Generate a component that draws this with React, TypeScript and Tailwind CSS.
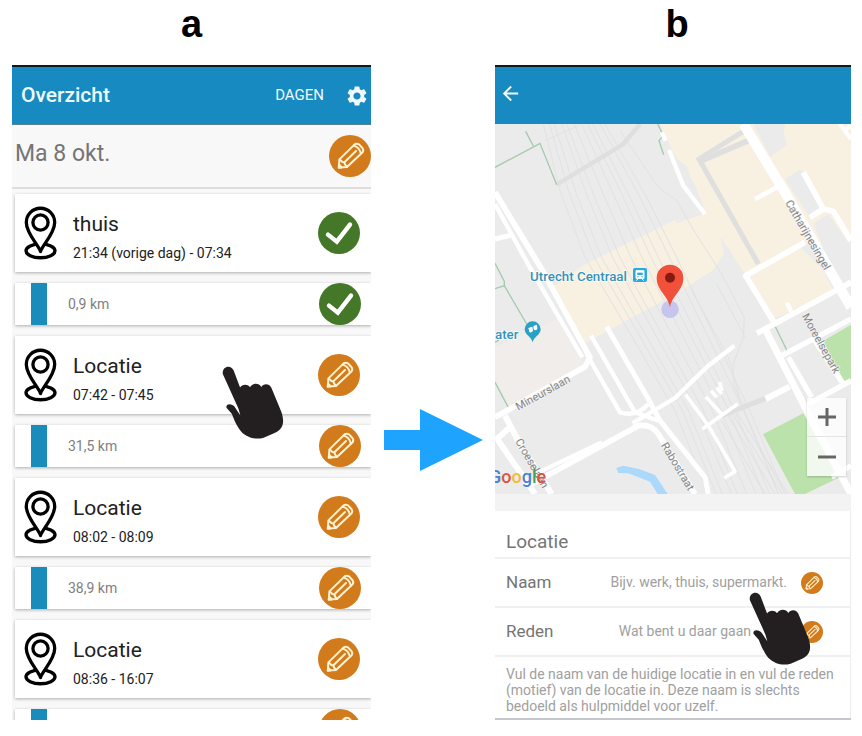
import React from "react";
import { MdArrowBack, MdSettings } from "react-icons/md";

type Status = "done" | "todo";
type Entry =
  | { kind: "place"; name: string; time: string; status: Status }
  | { kind: "trip"; distance?: string; status: Status };

const entries: Entry[] = [
  { kind: "place", name: "thuis", time: "21:34 (vorige dag) - 07:34", status: "done" },
  { kind: "trip", distance: "0,9 km", status: "done" },
  { kind: "place", name: "Locatie", time: "07:42 - 07:45", status: "todo" },
  { kind: "trip", distance: "31,5 km", status: "todo" },
  { kind: "place", name: "Locatie", time: "08:02 - 08:09", status: "todo" },
  { kind: "trip", distance: "38,9 km", status: "todo" },
  { kind: "place", name: "Locatie", time: "08:36 - 16:07", status: "todo" },
  { kind: "trip", status: "todo" },
];

function PencilBadge({ className }: { className: string }) {
  return (
    <svg viewBox="0 0 42 42" className={className} aria-hidden="true">
      <circle cx="21" cy="21" r="21" fill="#d27b1c" />
      <g fill="none" stroke="#fff3d2" strokeWidth="2" strokeLinejoin="round" strokeLinecap="round">
        <path d="M9.8 32.6 L10.4 24.4 L25.4 9.6 Q27.4 8 30 9.4 L33.4 13 Q35 15 33.6 17.2 L18 32 Z" />
        <path d="M24.8 10.6 Q30.4 12.2 31.8 18.4" />
        <path d="M11 24.6 L13.4 27 L15.4 27.4 L16 29.4 L17.8 31.6" />
        <path d="M15.4 27.2 L27 16" />
        <path d="M9.8 32.6 L10.2 29.8 L12.8 32.4 Z" fill="#fff3d2" />
      </g>
    </svg>
  );
}

function CheckBadge({ className }: { className: string }) {
  return (
    <svg viewBox="0 0 42 42" className={className} aria-hidden="true">
      <circle cx="21" cy="21" r="21" fill="#447828" />
      <path d="M10 22.6 L18.8 29.6 L32 12.6" fill="none" stroke="#fff" strokeWidth="4.4" strokeLinecap="round" strokeLinejoin="miter" />
    </svg>
  );
}

function StatusButton({ status }: { status: Status }) {
  return (
    <button type="button" aria-label={status === "done" ? "Bevestigd" : "Bewerken"} className="shrink-0">
      {status === "done" ? <CheckBadge className="size-[42px]" /> : <PencilBadge className="size-[42px]" />}
    </button>
  );
}

function PlaceIcon() {
  return (
    <svg viewBox="0 0 100 162" className="h-[54px] w-[33px] shrink-0" aria-hidden="true">
      <g fill="none" stroke="#000" strokeWidth="10">
        <ellipse cx="50" cy="135" rx="44" ry="21" />
        <path
          d="M50 137 C44 118 7 82 7 49 A43 43 0 0 1 93 49 C93 82 56 118 50 137 Z"
          fill="#fff"
          strokeLinejoin="round"
        />
        <circle cx="50" cy="49" r="23" />
      </g>
    </svg>
  );
}

function Hand({ className }: { className: string }) {
  return (
    <svg viewBox="38 48 184 220" className={className} aria-hidden="true">
      <path
        fill="#231f20"
        d="M39 72 C36 48 64 42 72 62 L91 113 C97 103 113 101 121 112 C128 98 148 98 155 111 C162 99 180 101 185 113 L215 185 C226 217 222 238 195 250 L162 264 C132 272 104 260 90 240 C76 220 72 206 66 192 L50 174 C48 160 64 160 74 170 L92 197 L86 176 Z"
      />
    </svg>
  );
}

const railLeft = [[145, 0], [195, 200], [270, 400], [400, 620], [540, 860], [640, 1110]];
const railRight = [[330, 0], [455, 220], [545, 400], [660, 640], [760, 850], [870, 1110]];
const rails = [0, 0.1, 0.18, 0.3, 0.38, 0.5, 0.62, 0.72, 0.8, 0.92, 1].map((t) =>
  railLeft.map(([x, y], i) => `${x + (railRight[i][0] - x) * t},${y + (railRight[i][1] - y) * t}`).join(" "),
);

function MapDrawing() {
  return (
    <svg
      viewBox="0 0 1068 1110"
      preserveAspectRatio="xMidYMid slice"
      className="absolute inset-0 size-full"
      role="img"
      aria-label="Kaart van Utrecht Centraal"
    >
      <rect width="1068" height="1110" fill="#ebebeb" />
      <path
        d="M495 0 H1068 V350 L910 363 L985 438 L1015 500 L840 583 L750 450 L735 430 L705 380 L690 385 L655 438 L600 473 L560 498 L490 538 L270 658 L175 488 L265 423 L540 288 L545 298 L630 268 L600 183 L585 158 L575 128 L550 118 Z"
        fill="#f8f0e1"
      />
      <path d="M0 670 L185 585 L270 730 L40 845 L0 760 Z" fill="#f1edeb" />
      <g fill="#ebebeb">
        <path d="M530 90 L575 128 L585 158 L600 183 L632 268 L545 298 L520 200 Z" />
        <path d="M775 0 H870 L866 30 L876 63 L825 98 Z" />
        <path d="M870 165 L920 135 L985 250 L945 280 Z M955 298 L1000 270 L1068 368 V500 L1030 480 Z" />
        <path d="M675 340 L705 380 L690 400 Z" />
      </g>

      <g fill="none" stroke="#e2e2e5" strokeWidth="3">
        {rails.map((points) => (
          <polyline key={points} points={points} />
        ))}
        <polyline points="375,20 490,190 545,230 600,325 680,450 748,580 745,640 715,720 715,780 790,960 850,1110" />
        <polyline points="665,480 740,620 750,640" />
        <polyline points="590,500 700,700 745,860 810,1000 870,1110" />
        <polyline points="150,50 250,5" />
      </g>
      <path
        d="M690 860 L840 1110 M700 850 L862 1110 M712 845 L880 1110 M680 890 L810 1110"
        fill="none"
        stroke="#dcdce1"
        strokeWidth="2"
      />

      <g fill="none" stroke="#dfdfdf">
        <path d="M185 182 L385 60 L435 0" strokeWidth="13" />
        <path d="M745 22 L612 105 L790 420" strokeWidth="15" />
        <path d="M615 112 L760 50" strokeWidth="17" />
        <path d="M680 875 L820 820" strokeWidth="15" />
      </g>

      <g fill="none" stroke="#a3cbad" strokeWidth="4">
        <path d="M0 130 L135 58 L185 182 M92 22 L115 66" />
        <path d="M0 418 L28 472 L28 485 L0 494 M28 485 L95 600" />
        <path d="M0 655 L12 648 M0 775 L40 850" />
        <path d="M488 0 L500 25 M505 35 L492 50 L506 92" />
        <path d="M841 608 L877 682" />
      </g>

      <g fill="#bbe2ab">
        <path d="M804 931 L925 868 L1030 1062 L930 1110 H900 Z" />
        <path d="M985 650 L1068 602 V765 L1048 774 Z" />
      </g>
      <path d="M364 1032 L385 1025 L432 1035 L480 1053 L518 1110 H488 L465 1073 L400 1048 L370 1047 Z" fill="#abd9fb" />

      <g fill="none" stroke="#fff" strokeLinejoin="round">
        <path d="M0 205 L140 435 L285 700 L270 728 L0 880" strokeWidth="17" />
        <path d="M0 240 L110 440 L262 700" strokeWidth="13" />
        <path d="M0 345 L50 333" strokeWidth="15" />
        <path d="M275 690 L375 865 Q425 880 460 840 M288 635 L420 865 L490 890" strokeWidth="13" />
        <path d="M335 608 L460 825 L495 890 L630 1060 L640 1110" strokeWidth="15" />
        <path d="M412 898 L540 822 L640 725 L718 665" strokeWidth="13" />
        <path d="M30 875 L75 960 L170 1110 M10 950 L120 1110 M0 950 L45 910" strokeWidth="18" />
        <path d="M110 1080 L430 905 Q470 900 490 930 L600 1110" strokeWidth="17" />
        <path d="M120 1050 L320 955" strokeWidth="12" />
        <path d="M572 812 L640 905 L720 1042 L688 1062 M622 915 L728 840 M632 818 L680 870 M648 800 L665 820 M665 790 L680 810 M674 774 L682 800" strokeWidth="11" />
        <path d="M812 825 L884 788" strokeWidth="18" />
        <path d="M500 25 L512 50 M522 78 L565 185 L630 270" strokeWidth="13" />
        <path d="M745 0 L870 205 L1068 550" strokeWidth="30" />
        <path d="M780 225 L850 188" strokeWidth="14" />
        <path d="M925 145 L985 255 L945 280 M985 255 L1015 262 L1068 350" strokeWidth="17" />
        <path d="M1035 0 L1068 45 M1048 20 L1068 5" strokeWidth="12" />
        <path d="M930 355 L752 455 L840 600 M786 628 L1068 475" strokeWidth="17" />
        <path d="M875 536 L890 565" strokeWidth="13" />
        <path d="M812 618 L925 840 L1068 1110" strokeWidth="21" />
        <path d="M860 695 L1068 585 M880 700 L950 820 M960 650 L1045 780 M940 840 L1068 770 M1068 1025 L1010 1060" strokeWidth="16" />
      </g>

      <g fontFamily="Roboto, sans-serif" fontSize="33" fill="#858585" stroke="#f4f4f4" strokeWidth="4" paintOrder="stroke">
        <text transform="translate(870 236) rotate(60)">Catharijnesingel</text>
        <text transform="translate(920 576) rotate(61)">Moreelsepark</text>
        <text transform="translate(70 860) rotate(-29)">Mineurslaan</text>
        <text transform="translate(60 952) rotate(60)">Croeselaan</text>
        <text transform="translate(497 964) rotate(59)">Rabostraat</text>
      </g>

      <g fontFamily="Roboto, sans-serif" fontSize="40" fontWeight="500" fill="#3592b6" stroke="#fff" strokeWidth="4" paintOrder="stroke">
        <text x="105" y="470">Utrecht Centraal</text>
        <text x="0" y="644">ater</text>
      </g>

      <rect x="414" y="432" width="42" height="42" rx="6" fill="#27a9e1" />
      <path d="M423 440 H447 V463 H423 Z M424 470 L430 463 M446 470 L440 463" fill="#fff" stroke="#fff" strokeWidth="3" />
      <path d="M427 446 H443 V453 H427 Z" fill="#27a9e1" />
      <circle cx="429" cy="458" r="2" fill="#27a9e1" />
      <circle cx="441" cy="458" r="2" fill="#27a9e1" />

      <path d="M113 655 C110 640 89 632 89 616 A24 24 0 0 1 137 616 C137 632 116 640 113 655 Z" fill="#28a2c4" />
      <path d="M100 612 L112 608 L114 620 Q110 628 103 624 Z M115 606 L126 602 L127 614 Q123 622 116 616 Z" fill="#fff" />

      <circle cx="525" cy="556" r="26" fill="#c5c5ee" />
      <path d="M525 550 C520 515 485 500 485 462 A40 40 0 0 1 565 462 C565 500 530 515 525 550 Z" fill="#f1503a" />
      <circle cx="525" cy="461" r="15" fill="#871a10" />
    </svg>
  );
}

function Overview() {
  return (
    <section aria-labelledby="label-a" className="relative min-h-0 overflow-hidden bg-[#f8f8f8]">
      <header className="flex h-[60px] items-center border-t-2 border-b border-t-[#0b1a22] border-b-[#5d7f90] bg-[#168ac1] pr-[2px] pl-[9px] text-[#f0fafd]">
        <h2 className="flex-1 text-[21px] font-medium">Overzicht</h2>
        <button type="button" className="mr-[21px] text-[15px]">DAGEN</button>
        <button type="button" aria-label="Instellingen">
          <MdSettings className="size-[24px]" />
        </button>
      </header>
      <div className="flex h-[64px] items-center border-b-2 border-[#dedede] pl-[3px]">
        <h3 className="flex-1 pb-1 text-[23px] text-[#757575]">Ma 8 okt.</h3>
        <StatusButton status="todo" />
      </div>
      <ul className="flex flex-col gap-[11px] pt-[5px] pl-[3px]">
        {entries.map((entry, index) =>
          entry.kind === "place" ? (
            <li key={index} className="flex h-[78px] items-center bg-white pr-[11px] pl-[9px] shadow-[0_1px_3px_rgba(0,0,0,0.3)]">
              <PlaceIcon />
              <div className="flex-1 pt-[8px] pl-[16px]">
                <div className="text-[21px] leading-[26px] text-[#212121]">{entry.name}</div>
                <div className="pt-[6px] text-[14px] leading-[20px] text-[#212121]">{entry.time}</div>
              </div>
              <StatusButton status={entry.status} />
            </li>
          ) : (
            <li key={index} className="flex h-[42px] shrink-0 items-center bg-white pr-[10px] pl-[16px] shadow-[0_1px_3px_rgba(0,0,0,0.3)]">
              <div className="w-[16px] self-stretch bg-[#1a8cbc]" />
              <div className="flex-1 pl-[21px] text-[14px] text-[#808080]">{entry.distance}</div>
              <StatusButton status={entry.status} />
            </li>
          ),
        )}
      </ul>
      <Hand className="pointer-events-none absolute top-[301px] left-[210px] h-[73px] w-[62px]" />
    </section>
  );
}

function Field({ id, label, placeholder, inputClass = "" }: { id: string; label: string; placeholder: string; inputClass?: string }) {
  return (
    <div className="flex h-[49px] items-center border-b-2 border-[#f0f0f0] pr-[27px] pl-[11px]">
      <label htmlFor={id} className="w-[70px] text-[17px] text-[#757575]">{label}</label>
      <input
        id={id}
        type="text"
        placeholder={placeholder}
        className={`min-w-0 flex-1 bg-transparent text-right text-[14px] outline-none placeholder:text-[#a0a0a0] ${inputClass}`}
      />
      <button type="button" aria-label={`${label} bewerken`} className="ml-[14px] shrink-0">
        <PencilBadge className="size-[22px]" />
      </button>
    </div>
  );
}

function LocationDetail() {
  return (
    <section aria-labelledby="label-b" className="relative flex min-h-0 flex-col border-b-2 border-[#c4c8cd] bg-white">
      <header className="flex h-[59px] shrink-0 items-center border-t-2 border-[#0b1a22] bg-[#168ac1] pb-1 pl-1 text-[#f0fafd]">
        <button type="button" aria-label="Terug">
          <MdArrowBack className="size-[23px]" />
        </button>
      </header>
      <div className="relative min-h-0 flex-1 overflow-hidden">
        <MapDrawing />
        <div className="absolute bottom-[4px] left-[-6px] text-[18px] leading-[26px] font-medium" aria-label="Google">
          <span className="text-[#4a80d8]">G</span>
          <span className="text-[#e0503c]">o</span>
          <span className="text-[#f0bb38]">o</span>
          <span className="text-[#4a80d8]">g</span>
          <span className="text-[#3fa45c]">l</span>
          <span className="text-[#e0503c]">e</span>
        </div>
        <div className="absolute right-[5px] bottom-[18px] flex w-[39px] flex-col bg-white/80 shadow-[0_1px_2px_rgba(0,0,0,0.2)]">
          <button type="button" aria-label="Inzoomen" className="flex h-[39px] items-center justify-center border-b border-[#e4e4e4]">
            <svg viewBox="0 0 18 18" className="size-[18px]" aria-hidden="true">
              <path d="M9 0 V18 M0 9 H18" stroke="#666" strokeWidth="3" />
            </svg>
          </button>
          <button type="button" aria-label="Uitzoomen" className="flex h-[39px] items-center justify-center">
            <svg viewBox="0 0 18 18" className="size-[18px]" aria-hidden="true">
              <path d="M0 9 H18" stroke="#666" strokeWidth="3" />
            </svg>
          </button>
        </div>
      </div>
      <div className="h-[17px] shrink-0 bg-[#f3f3f3]" />
      <div className="shrink-0 border-r border-[#ececec]">
        <h2 className="border-b-2 border-[#f0f0f0] pt-[19px] pb-[3px] pl-[11px] text-[19px] leading-[24px] text-[#757575]">Locatie</h2>
        <Field id="naam" label="Naam" placeholder="Bijv. werk, thuis, supermarkt." />
        <Field id="reden" label="Reden" placeholder="Wat bent u daar gaan" inputClass="pr-[36px]" />
        <p className="pt-[9px] pr-[10px] pb-[4px] pl-[11px] text-[14px] leading-[16px] text-[#a0a0a0]">
          Vul de naam van de huidige locatie in en vul de reden (motief) van de locatie in. Deze naam is slechts bedoeld als hulpmiddel voor uzelf.
        </p>
      </div>
      <Hand className="pointer-events-none absolute right-[40px] bottom-[53px] h-[73px] w-[62px]" />
    </section>
  );
}

export default function App() {
  return (
    <main className="grid h-screen min-h-[640px] grid-cols-[minmax(0,359fr)_124px_minmax(0,356fr)] grid-rows-[65px_minmax(0,1fr)] bg-white pr-[11px] pb-[16px] pl-[12px] font-['Roboto',sans-serif]">
      <h1 id="label-a" className="text-center font-['Liberation_Sans',Arial,sans-serif] text-[38px] leading-[48px] font-bold text-black">a</h1>
      <div />
      <h1 id="label-b" className="pl-2 text-center font-['Liberation_Sans',Arial,sans-serif] text-[38px] leading-[48px] font-bold text-black">b</h1>
      <Overview />
      <div className="flex justify-center pt-[344px]">
        <svg viewBox="0 0 99 62" className="h-[62px] w-[99px]" role="img" aria-label="Naar volgende scherm">
          <path d="M0 21 H36 V0 L99 31 L36 62 V41 H0 Z" fill="#1ea4ff" />
        </svg>
      </div>
      <LocationDetail />
    </main>
  );
}
